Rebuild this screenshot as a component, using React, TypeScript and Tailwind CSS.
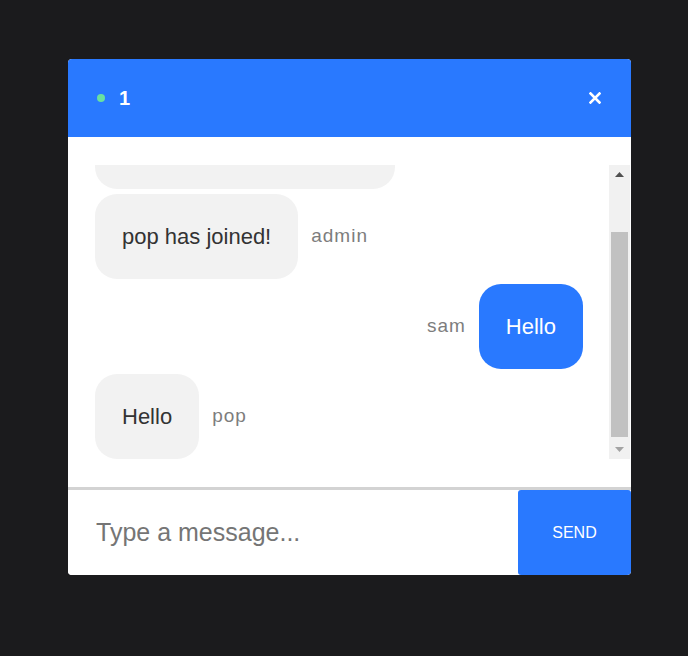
import React, { useEffect, useRef } from 'react';

type Msg = { user: string; text: string; mine?: boolean };

const messages: Msg[] = [
  { user: 'admin', text: 'sam, welcome to room 1.' },
  { user: 'admin', text: 'pop has joined!' },
  { user: 'sam', text: 'Hello', mine: true },
  { user: 'pop', text: 'Hello' },
];

const font = { fontFamily: '"Liberation Sans", Arial, sans-serif' };

const Message = ({ msg }: { msg: Msg }) => (
  <div className={`flex items-center gap-[13px] ${msg.mine ? 'justify-end' : 'justify-start'}`}>
    {msg.mine && <span className="text-[19px] tracking-[1px] text-[#7d7d7d]">{msg.user}</span>}
    <div
      className={`rounded-[22px] px-[27px] py-[30px] text-[22px] leading-[25px] ${
        msg.mine ? 'bg-[#2979ff] text-white' : 'bg-[#f2f2f2] text-[#333333]'
      }`}
    >
      {msg.text}
    </div>
    {!msg.mine && <span className="text-[19px] tracking-[1px] text-[#7d7d7d]">{msg.user}</span>}
  </div>
);

// classic scrollbar look, drawn beside the list
const ScrollBar = () => (
  <div className="flex w-[21px] flex-col bg-[#f1f1f1]">
    <div className="flex h-[17px] items-center justify-center pt-[2px]">
      <svg width="9" height="5" viewBox="0 0 9 5">
        <path d="M0 5 L4.5 0 L9 5 Z" fill="#505050" />
      </svg>
    </div>
    <div className="flex-1">
      <div className="mx-[2px] mt-[50px] h-[205px] bg-[#c1c1c1]" />
    </div>
    <div className="flex h-[17px] items-center justify-center pb-[2px]">
      <svg width="9" height="5" viewBox="0 0 9 5">
        <path d="M0 0 L9 0 L4.5 5 Z" fill="#a3a3a3" />
      </svg>
    </div>
  </div>
);

export default function App() {
  const listRef = useRef<HTMLDivElement>(null);

  useEffect(() => {
    if (listRef.current) listRef.current.scrollTop = 71;
  }, []);

  return (
    <div className="min-h-[656px] w-full bg-[#1b1b1d] pt-[59px] pl-[68px]" style={font}>
      <div className="flex w-[563px] flex-col overflow-hidden rounded-[4px] bg-white">
        {/* header */}
        <div className="flex h-[78px] items-center justify-between bg-[#2979ff] pl-[29px] pr-[30px] text-white">
          <div className="flex items-center gap-[14px]">
            <span className="h-[8px] w-[8px] rounded-full bg-[#69e0a0]" />
            <span className="text-[20px] font-bold leading-none">1</span>
          </div>
          <svg width="12" height="12" viewBox="0 0 12 12">
            <path d="M1.5 1.5 L10.5 10.5 M10.5 1.5 L1.5 10.5" stroke="white" strokeWidth="2.6" strokeLinecap="square" />
          </svg>
        </div>

        {/* messages */}
        <div className="flex h-[350px] py-[28px] pr-[1px]">
          <div
            ref={listRef}
            className="h-full flex-1 overflow-y-scroll pl-[27px] pr-[26px] [scrollbar-width:none]"
          >
            <div className="flex flex-col gap-[5px] pt-[10px] pb-[8px]">
              {messages.map((m, i) => (
                <Message key={i} msg={m} />
              ))}
            </div>
          </div>
          <ScrollBar />
        </div>

        {/* input */}
        <div className="flex h-[88px] border-t-[3px] border-[#d3d3d3]">
          <input
            className="min-w-0 flex-1 bg-white pl-[28px] text-[25px] text-[#333] outline-none placeholder:text-[#757575]"
            placeholder="Type a message..."
            style={font}
          />
          <button className="w-[113px] rounded-[3px] bg-[#2979ff] text-[16px] uppercase text-white" style={font}>
            Send
          </button>
        </div>
      </div>
    </div>
  );
}
